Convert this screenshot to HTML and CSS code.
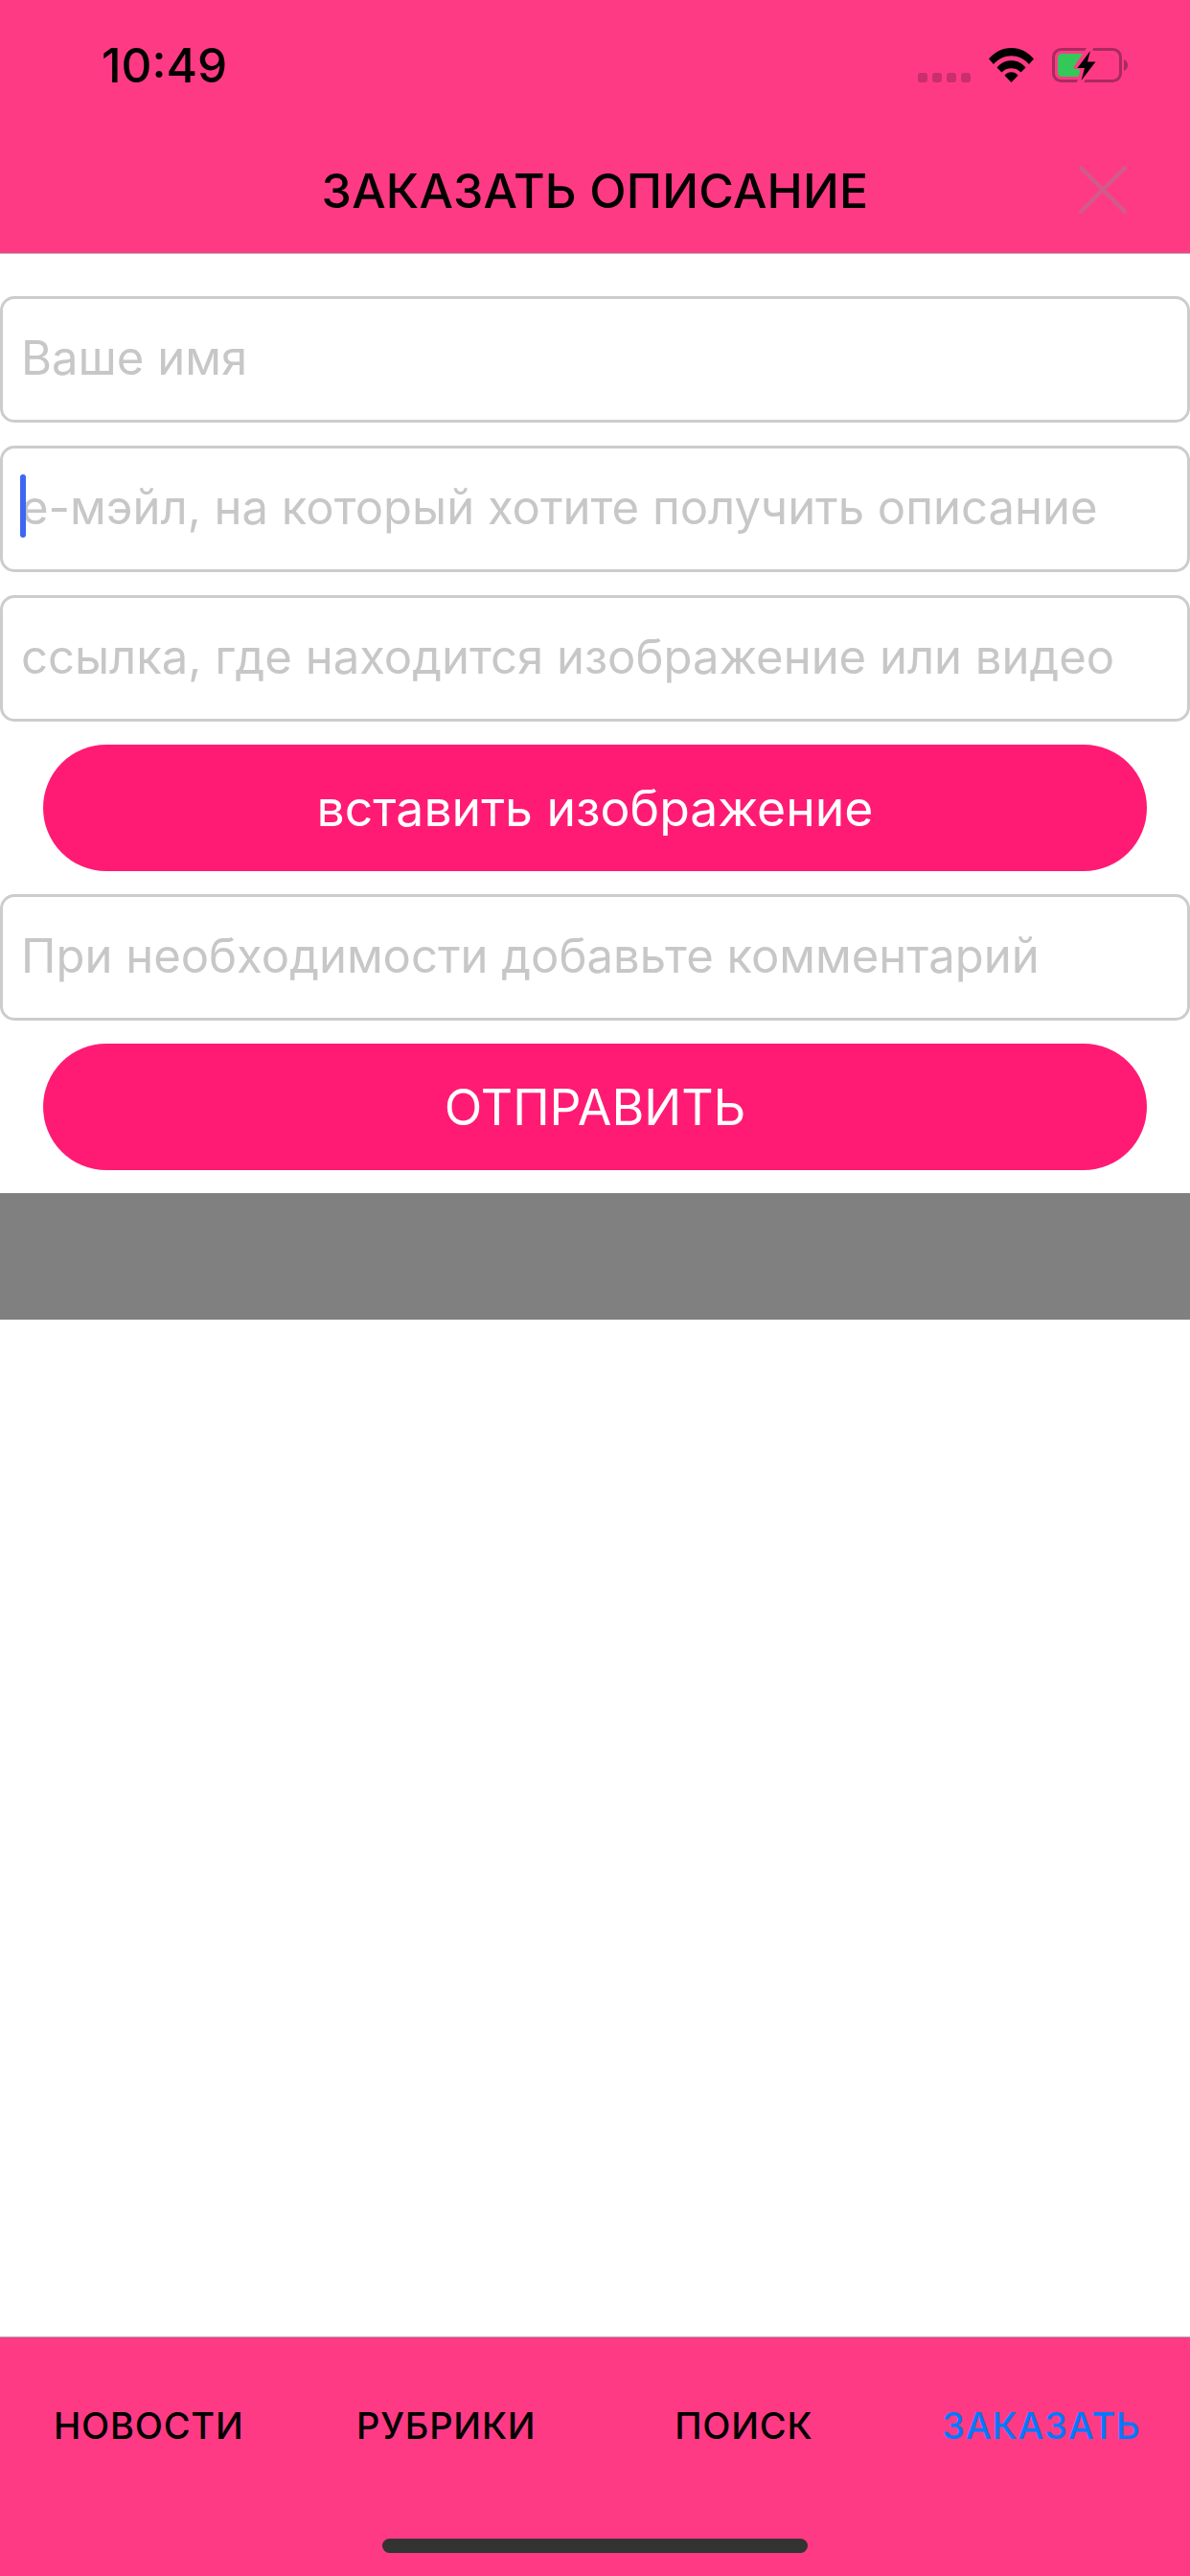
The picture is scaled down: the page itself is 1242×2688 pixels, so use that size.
FILE: index.html
```html
<!DOCTYPE html>
<html lang="ru">
<head>
<meta charset="utf-8">
<title>Заказать описание</title>
<link rel="stylesheet" href="styles.css">
</head>
<body>
<div class="screen">
  <header class="header">
    <div class="status">
      <span class="time">10:49</span>
      <div class="status-icons">
        <div class="dots"><i></i><i></i><i></i><i></i></div>
        <svg class="wifi" width="47" height="36" viewBox="0 0 47 36">
          <path d="M0 11.500C6 4.400 14.200 0 23.500 0S41 4.400 47 11.500L42 17C37 11.500 30.500 8.200 23.500 8.200S10 11.500 5 17Z"/>
          <path d="M8.500 20.500C12 15.900 17.300 13.200 23.500 13.200S35 15.900 38.500 20.500L33.500 25.500C31 22.800 27.500 21.300 23.500 21.300S16 22.800 13.500 25.500Z"/>
          <path d="M16.500 28.800C18.300 26.300 20.800 25.200 23.500 25.200S28.700 26.300 30.500 28.800L23.500 36Z"/>
        </svg>
        <svg class="battery" width="79" height="36" viewBox="0 0 79 36">
          <rect x="1.500" y="1.500" width="70" height="33" rx="8" fill="none" stroke="#a92a5f" stroke-width="3"/>
          <path d="M75 12C77.500 13 79 15 79 18S77.500 23 75 24Z" fill="#a92a5f"/>
          <path d="M6 10C6 7.800 7.800 6 10 6H37L23 22H29V30H10C7.800 30 6 28.200 6 26Z" fill="#34c759"/>
          <path d="M36 0L22 21H30L26 36H33L48 14H40L43 0Z" fill="#ff3a85"/>
          <path d="M40 3L26.500 21H34L30.500 34L45.500 14.500H37Z" fill="#000"/>
        </svg>
      </div>
    </div>
    <div class="titlebar">
      <h1 class="title">ЗАКАЗАТЬ ОПИСАНИЕ</h1>
      <svg class="close" width="50" height="50" viewBox="0 0 50 50">
        <path d="M2 2L48 48M48 2L2 48" fill="none" stroke="#cf5c8b" stroke-width="4" stroke-linecap="round"/>
      </svg>
    </div>
  </header>
  <main class="form">
    <div class="field"><span class="placeholder">Ваше имя</span></div>
    <div class="field">
      <span class="caret"></span>
      <span class="placeholder">е-мэйл, на который хотите получить описание</span>
    </div>
    <div class="field"><span class="placeholder">ссылка, где находится изображение или видео</span></div>
    <div class="button">вставить изображение</div>
    <div class="field"><span class="placeholder">При необходимости добавьте комментарий</span></div>
    <div class="button">ОТПРАВИТЬ</div>
    <div class="band"></div>
  </main>
  <nav class="tabs">
    <a class="tab">НОВОСТИ</a>
    <a class="tab">РУБРИКИ</a>
    <a class="tab">ПОИСК</a>
    <a class="tab tab-active">ЗАКАЗАТЬ</a>
    <span class="home"></span>
  </nav>
</div>
</body>
</html>
```

FILE: styles.css
```css
* { box-sizing: border-box; }
html, body { margin: 0; padding: 0; background: #fff; }
body { font-family: Inter, "Noto Sans", "Liberation Sans", sans-serif; }

.screen {
  width: 1242px;
  height: 2688px;
  display: flex;
  flex-direction: column;
  overflow: hidden;
}

.header {
  background: #ff3a85;
  height: 265px;
  border-bottom: 1px solid #b3b3b3;
  flex: none;
}

.status {
  height: 135px;
  display: flex;
  align-items: center;
  justify-content: space-between;
  padding: 0 65px 0 106px;
}

.time {
  font-size: 49.500px;
  line-height: 58px;
  font-weight: 500;
  color: #000;
}

.status-icons {
  display: flex;
  align-items: flex-end;
  gap: 19px;
}

.dots { display: flex; gap: 5px; }
.dots i {
  display: block;
  width: 10px;
  height: 10px;
  border-radius: 3px;
  background: #c92f6c;
}

.wifi, .battery { display: block; }

.titlebar {
  position: relative;
  height: 127px;
  display: flex;
  align-items: center;
  justify-content: center;
}

.title {
  margin: 0;
  font-size: 50px;
  line-height: 60px;
  font-weight: 500;
  letter-spacing: 0.200px;
  color: #000;
}

.close {
  position: absolute;
  right: 66px;
  top: 38px;
}

.form {
  flex: 1;
  display: flex;
  flex-direction: column;
  gap: 24px;
  padding-top: 44px;
}

.field {
  position: relative;
  height: 132px;
  border: 3px solid #cccccc;
  border-radius: 15px;
  display: flex;
  align-items: center;
  padding: 0 0 3px 19px;
}

.placeholder {
  font-size: 49px;
  line-height: 60px;
  color: #c7c7c7;
  white-space: nowrap;
}

.caret {
  position: absolute;
  left: 18px;
  top: 27px;
  width: 6px;
  height: 66px;
  border-radius: 3px;
  background: #3f66f0;
}

.button {
  height: 132px;
  margin: 0 45px;
  border-radius: 66px;
  background: #ff1b74;
  color: #fff;
  font-size: 51.700px;
  line-height: 60px;
  display: flex;
  align-items: center;
  justify-content: center;
}

.band {
  height: 132px;
  background: #808080;
}

.tabs {
  position: relative;
  flex: none;
  height: 250px;
  background: #ff3a85;
  border-top: 1px solid #b3b3b3;
  display: grid;
  grid-template-columns: repeat(4, 1fr);
  align-items: start;
}

.tab {
  height: 183px;
  display: flex;
  align-items: center;
  justify-content: center;
  font-size: 38px;
  font-weight: 500;
  letter-spacing: 0.800px;
  color: #000;
}

.tab-active { color: #007aff; }

.home {
  position: absolute;
  left: 399px;
  bottom: 24px;
  width: 444px;
  height: 15px;
  border-radius: 8px;
  background: #333333;
}
```
